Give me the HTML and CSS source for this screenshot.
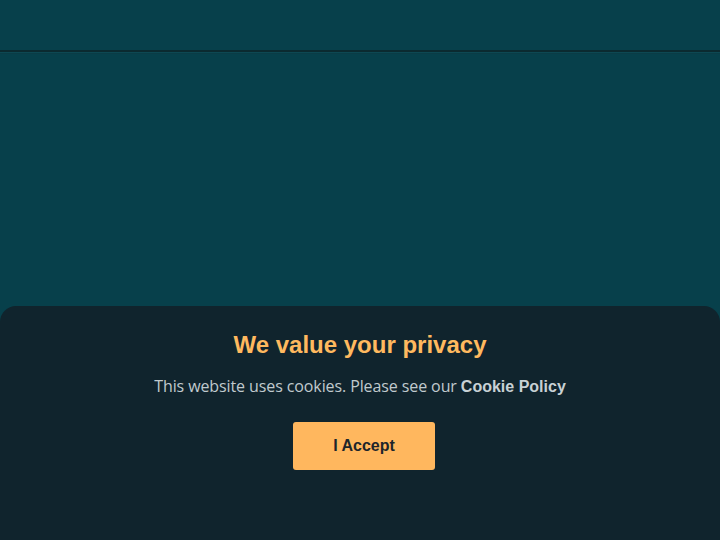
FILE: index.html
```html
<!DOCTYPE html>
<html lang="en">
<head>
<meta charset="utf-8">
<title>Cookie consent</title>
<link rel="stylesheet" href="styles.css">
</head>
<body>
<header class="topbar"></header>
<main class="content"></main>
<section class="cookie-banner">
  <h2 class="cookie-title">We value your privacy</h2>
  <p class="cookie-text">This website uses cookies. Please see our <a class="cookie-link" href="#">Cookie Policy</a></p>
  <button class="cookie-accept" type="button">I Accept</button>
</section>
</body>
</html>
```
FILE: styles.css
```css
html, body {
  margin: 0;
  padding: 0;
  height: 100%;
}
body {
  background: #07404b;
  font-family: "Open Sans", "Noto Sans", sans-serif;
  overflow: hidden;
}
.topbar {
  height: 50px;
  border-bottom: 2px solid #0b2a30;
  box-shadow: 0 1px 0 #0d4853, 0 2px 0 #0a3c46;
}
.cookie-banner {
  position: fixed;
  left: 0;
  right: 0;
  bottom: 0;
  height: 234px;
  box-sizing: border-box;
  background: #10242d;
  border-radius: 16px 16px 0 0;
  padding-top: 25px;
  display: flex;
  flex-direction: column;
  align-items: center;
}
.cookie-title {
  margin: 0;
  font-family: "Liberation Sans", Arial, sans-serif;
  font-weight: 700;
  font-size: 24px;
  line-height: 28px;
  color: #ffb95f;
}
.cookie-text {
  margin: 15px 0 0;
  font-size: 16px;
  line-height: 24px;
  letter-spacing: -0.1px;
  color: #c0cace;
}
.cookie-link {
  font-family: "Liberation Sans", Arial, sans-serif;
  font-weight: 700;
  letter-spacing: 0;
  color: #c8d1d5;
  text-decoration: none;
}
.cookie-accept {
  margin: 23px 0 0 8px;
  width: 142px;
  height: 48px;
  border: none;
  border-radius: 3px;
  background: #ffb75e;
  color: #1d252b;
  font-family: "Liberation Sans", Arial, sans-serif;
  font-weight: 700;
  font-size: 16px;
  cursor: pointer;
}
```
